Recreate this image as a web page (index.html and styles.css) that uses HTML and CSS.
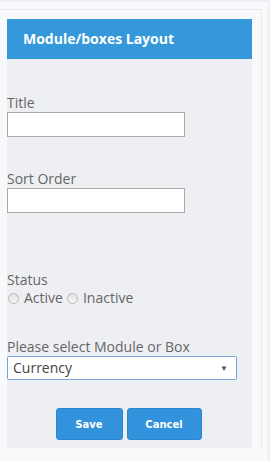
FILE: index.html
```html
<!DOCTYPE html>
<html lang="en">
<head>
    <meta charset="UTF-8">
    <meta name="viewport" content="width=device-width, initial-scale=1.0">
    <title>Module/boxes Layout</title>
    <link rel="stylesheet" href="styles.css">
</head>
<body>
    <div class="page">
        <div class="wrap">
            <div class="panel">
                <div class="panel-head">Module/boxes Layout</div>
                <form class="panel-body">
                    <div class="field">
                        <label>Title</label>
                        <input type="text" class="text-input">
                    </div>
                    <div class="field">
                        <label>Sort Order</label>
                        <input type="text" class="text-input">
                    </div>
                    <div class="field status">
                        <label>Status</label>
                        <div class="radios">
                            <span class="radio"></span><span class="radio-text">Active</span>
                            <span class="radio"></span><span class="radio-text">Inactive</span>
                        </div>
                    </div>
                    <div class="field">
                        <label>Please select Module or Box</label>
                        <div class="select">
                            <span>Currency</span>
                            <span class="arrow">&#9660;</span>
                        </div>
                    </div>
                    <div class="actions">
                        <button type="button" class="btn btn-save">Save</button>
                        <button type="button" class="btn btn-cancel">Cancel</button>
                    </div>
                </form>
            </div>
        </div>
    </div>
</body>
</html>
```

FILE: styles.css
```css
body {
    margin: 0;
    background-color: #f8f9fb;
    font-family: "Open Sans", Arial, sans-serif;
    color: #666;
}
.page {
    width: 269px;
    height: 461px;
    border-top: 2px solid #eceef1;
    border-right: 1px solid #e8eaed;
    box-sizing: border-box;
}
.wrap {
    margin-top: 7px;
    width: 262px;
    border-top: 1px solid #e8eaed;
    border-right: 1px solid #e8eaed;
    box-sizing: border-box;
    padding: 9px 9px 0 7px;
}
.panel {
    width: 245px;
    background-color: #eeeff3;
}
.panel-head {
    background-color: #3498db;
    color: white;
    font-weight: bold;
    font-size: 14px;
    height: 40px;
    line-height: 40px;
    padding-left: 16px;
}
.panel-body {
    margin: 0;
    padding: 35px 0 8px 0;
}
.field {
    margin-bottom: 33px;
}
.field label {
    display: block;
    font-size: 14px;
    line-height: 18px;
    height: 18px;
}
.text-input {
    display: block;
    width: 178px;
    height: 25px;
    box-sizing: border-box;
    margin: 0;
    border: 1px solid #a9a9a9;
    background: white;
}
.status {
    margin-top: 58px;
    margin-bottom: 31px;
}
.radios {
    font-size: 14px;
    line-height: 18px;
    display: flex;
    align-items: center;
    padding-left: 1px;
}
.radio {
    display: inline-block;
    width: 9px;
    height: 9px;
    border-radius: 50%;
    border: 1px solid #b8b8b8;
    background: linear-gradient(#e2e2e2, #f6f6f6);
    margin-right: 5px;
}
.radio-text {
    margin-right: 4px;
}
.select {
    width: 230px;
    height: 24px;
    box-sizing: border-box;
    border: 1px solid #7aa3e0;
    border-radius: 2px;
    background: white;
    color: #444;
    font-size: 14px;
    line-height: 22px;
    padding: 0 8px 0 5px;
    display: flex;
    justify-content: space-between;
}
.arrow {
    font-size: 8px;
    color: #555;
}
.actions {
    display: flex;
    justify-content: center;
    gap: 4px;
    margin-top: -5px;
    padding-right: 2px;
}
.btn {
    background-color: #3292dc;
    color: white;
    border: 1px solid #2a88d2;
    border-radius: 3px;
    font-family: "DejaVu Sans", Verdana, sans-serif;
    font-weight: bold;
    font-size: 10px;
    height: 32px;
    cursor: pointer;
}
.btn-save {
    width: 67px;
}
.btn-cancel {
    width: 75px;
}
```
